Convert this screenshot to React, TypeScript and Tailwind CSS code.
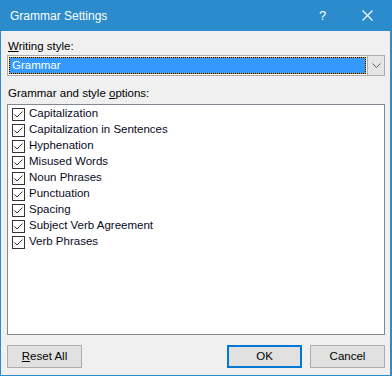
import React from "react";

const options = [
  "Capitalization",
  "Capitalization in Sentences",
  "Hyphenation",
  "Misused Words",
  "Noun Phrases",
  "Punctuation",
  "Spacing",
  "Subject Verb Agreement",
  "Verb Phrases",
];

const CheckBox = () => (
  <svg width="13" height="13" viewBox="0 0 13 13" className="shrink-0">
    <rect x="0.5" y="0.5" width="12" height="12" fill="#fff" stroke="#333" />
    <path d="M2.5 6.5 L5 9 L10.5 3.5" fill="none" stroke="#333" strokeWidth="1" />
  </svg>
);

const DialogButton = ({
  children,
  primary,
}: {
  children: React.ReactNode;
  primary?: boolean;
}) => (
  <button
    className={
      primary
        ? "w-[75px] h-[23px] bg-[#e1e1e1] border-2 border-[#0078d7] text-black flex items-center justify-center"
        : "w-[75px] h-[23px] bg-[#e1e1e1] border border-[#adadad] text-black flex items-center justify-center"
    }
  >
    {children}
  </button>
);

export default function App() {
  return (
    <div
      className="w-[392px] h-[376px] flex flex-col bg-[#f0f0f0] border-l border-r-2 border-b border-[#2b8bcb] text-[11.5px] text-black"
      style={{ fontFamily: '"Liberation Sans", Arial, sans-serif' }}
    >
      {/* title bar */}
      <div className="h-[31px] shrink-0 bg-[#2b8bcb] flex items-center text-white">
        <span className="pl-[9px] text-[12px] flex-1">Grammar Settings</span>
        <div className="w-[45px] h-full flex items-center justify-center text-[13px]">?</div>
        <div className="w-[45px] h-full flex items-center justify-center">
          <svg width="11" height="11" viewBox="0 0 11 11">
            <path d="M0.5 0.5 L10.5 10.5 M10.5 0.5 L0.5 10.5" stroke="#fff" strokeWidth="1.1" />
          </svg>
        </div>
      </div>

      <div className="flex-1 flex flex-col pl-[6px] pr-[5px]">
        <div className="mt-[8px] h-[16px] flex items-center pl-[1px]">
          <span>
            <span className="underline">W</span>riting style:
          </span>
        </div>
        <div className="mt-[0px] h-[21px] flex border border-[#acacac] bg-white">
          <div className="flex-1 p-[1px] pr-[1px]">
            <div className="h-full bg-[#e8962c]">
              <div className="h-full border border-dotted border-black bg-[#3399ff] bg-clip-padding text-white flex items-center pl-[2px]">
                Grammar
              </div>
            </div>
          </div>
          <div className="w-[17px] bg-[#e5e5e5] border-l border-[#acacac] flex items-center justify-center">
            <svg width="9" height="5" viewBox="0 0 9 5">
              <path d="M0.5 0.5 L4.5 4.5 L8.5 0.5" fill="none" stroke="#606060" strokeWidth="1" />
            </svg>
          </div>
        </div>

        <div className="mt-[10px] h-[16px] flex items-center pl-[1px]">
          <span>
            Grammar and style <span className="underline">o</span>ptions:
          </span>
        </div>
        <div className="mt-[2px] h-[231px] border border-[#828790] bg-white pt-[1px] pl-[4px] flex flex-col">
          {options.map((o) => (
            <div key={o} className="h-[16px] flex items-center gap-[4px]">
              <CheckBox />
              <span className="text-[#0a0a1e]">{o}</span>
            </div>
          ))}
        </div>

        <div className="mt-[10px] flex items-center">
          <DialogButton>
            <span>
              <span className="underline">R</span>eset All
            </span>
          </DialogButton>
          <div className="flex-1" />
          <DialogButton primary>OK</DialogButton>
          <div className="w-[8px]" />
          <DialogButton>Cancel</DialogButton>
        </div>
      </div>
    </div>
  );
}
